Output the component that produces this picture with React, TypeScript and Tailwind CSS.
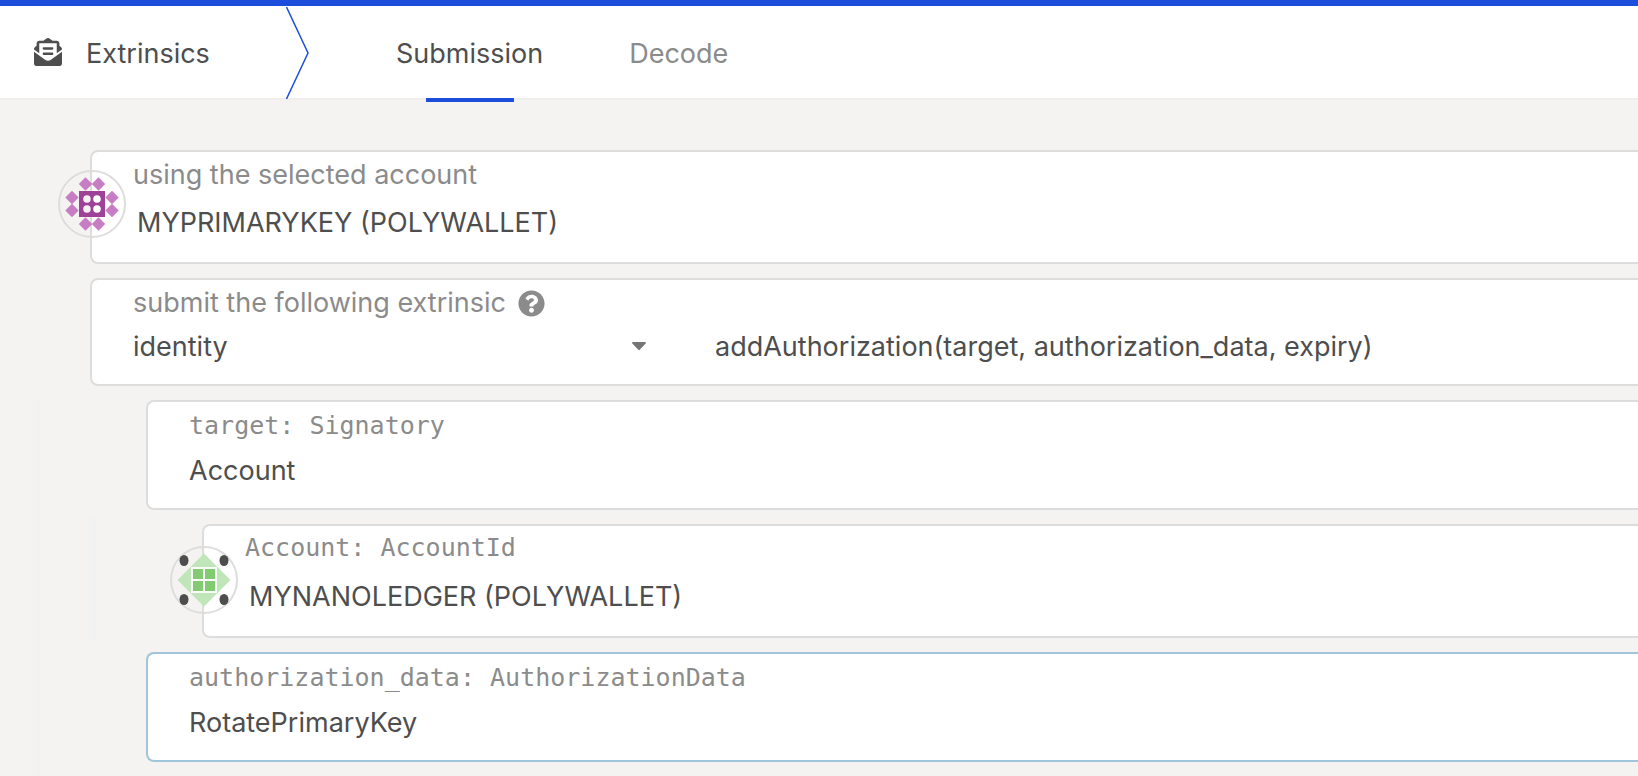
import React, { useState } from 'react';
import { FaCaretDown, FaEnvelopeOpenText, FaQuestionCircle } from 'react-icons/fa';

const ACCOUNTS = {
  primary: 'MYPRIMARYKEY (POLYWALLET)',
  ledger: 'MYNANOLEDGER (POLYWALLET)',
};

const valueClass = 'block h-9 w-full appearance-none bg-transparent text-[27px] leading-9 text-[#4e4e4e] outline-none';
const labelClass = 'h-9 text-[27px] leading-9 text-[#8b8b8b]';
const monoClass = "block h-9 font-['DejaVu_Sans_Mono',monospace] text-[25px] leading-[38px] text-[#8b8b8b]";
const cardClass = 'relative rounded-l-lg border-2 border-r-0 bg-white pl-[41px]';

const PrimaryIdenticon = () => (
  <svg viewBox="0 0 68 68" className="absolute -left-[34px] top-[18px] size-[68px]" aria-hidden="true">
    <circle cx="34" cy="34" r="33" fill="none" stroke="#dddddd" strokeWidth="2" />
    <g fill="#c77dc3">
      {[[27.5, 14], [40.5, 14], [27.5, 54], [40.5, 54], [14, 27.5], [14, 40.5], [54, 27.5], [54, 40.5]].map(([x, y]) => (
        <path key={`${x}-${y}`} d={`M${x} ${y - 6.7}l6.7 6.7l-6.7 6.7l-6.7 -6.7z`} />
      ))}
    </g>
    {/* the dots are holes, the card edge shows through */}
    <path
      fill="#9d4296"
      fillRule="evenodd"
      d="M21 21h26v26H21zM25.200 29a3.800 3.800 0 1 0 7.600 0a3.800 3.800 0 1 0 -7.600 0zM35.200 29a3.800 3.800 0 1 0 7.600 0a3.800 3.800 0 1 0 -7.600 0zM25.200 39a3.800 3.800 0 1 0 7.600 0a3.800 3.800 0 1 0 -7.600 0zM35.200 39a3.800 3.800 0 1 0 7.600 0a3.800 3.800 0 1 0 -7.600 0z"
    />
  </svg>
);

const LedgerIdenticon = () => (
  <svg viewBox="0 0 68 68" className="absolute -left-[34px] top-5 size-[68px]" aria-hidden="true">
    <circle cx="34" cy="34" r="33" fill="none" stroke="#dddddd" strokeWidth="2" />
    <path d="M34 7.500L60.500 34L34 60.500L7.500 34z" fill="#bfe5b8" />
    <rect x="21" y="21" width="26" height="26" fill="#fafaf9" />
    <g fill="#82cb73">
      <rect x="23" y="23" width="10" height="10" />
      <rect x="35" y="23" width="10" height="10" />
      <rect x="23" y="35" width="10" height="10" />
      <rect x="35" y="35" width="10" height="10" />
    </g>
    <g fill="#4d4d4d">
      <ellipse cx="14" cy="14.500" rx="4.500" ry="5.500" />
      <ellipse cx="54" cy="14.500" rx="4.500" ry="5.500" />
      <ellipse cx="14" cy="53.500" rx="4.500" ry="5.500" />
      <ellipse cx="54" cy="53.500" rx="4.500" ry="5.500" />
    </g>
  </svg>
);

const Header = () => (
  <header className="flex h-[100px] border-b-2 border-t-6 border-b-[#efeeed] border-t-[#1c4edb] bg-white text-[27px] leading-9 text-[#4e4e4e]">
    <div className="flex w-[286px] items-center gap-6 pl-[34px]">
      <FaEnvelopeOpenText size={28} />
      <h1 className="pt-1">Extrinsics</h1>
    </div>
    <svg viewBox="0 0 24 94" className="h-[94px] w-6" fill="none" stroke="#1c4edb" strokeWidth="1.500" aria-hidden="true">
      <path d="M0.500 1L22 47L0.500 93" />
    </svg>
    <nav className="flex gap-[86px] pl-[86px]">
      <a href="#submission" className="relative flex items-center pt-1">
        Submission
        <span className="absolute -bottom-1 left-1/2 h-1 w-[88px] -translate-x-1/2 bg-[#1c4edb]" />
      </a>
      <a href="#decode" className="flex items-center pt-1 text-[#8b8b8b]">Decode</a>
    </nav>
  </header>
);

export default function App() {
  const [account, setAccount] = useState(ACCOUNTS.primary);
  const [target, setTarget] = useState(ACCOUNTS.ledger);

  return (
    <div className="min-h-screen bg-[#f4f3f1] font-['Inter',sans-serif]">
      <Header />

      <main className="flex flex-col gap-3.5 pt-[50px] pl-[90px]">
        <div className={`${cardClass} h-[114px] border-[#dddddd] pt-[5px]`}>
          <PrimaryIdenticon />
          <label htmlFor="account" className={`${labelClass} block`}>using the selected account</label>
          <input id="account" className={`${valueClass} mt-3 pl-1`} value={account} onChange={(e) => setAccount(e.target.value)} />
        </div>

        <div className={`${cardClass} h-[108px] border-[#dddddd] pt-[5px]`}>
          <label htmlFor="section" className={`${labelClass} flex items-center gap-3`}>
            submit the following extrinsic
            <FaQuestionCircle size={27} />
          </label>
          <div className="mt-2 flex">
            <div className="relative w-[582px] shrink-0">
              <select id="section" className={valueClass}>
                <option>identity</option>
              </select>
              <FaCaretDown size={24} className="pointer-events-none absolute right-16 top-1 text-[#767676]" />
            </div>
            <select aria-label="method" className={valueClass}>
              <option>addAuthorization(target, authorization_data, expiry)</option>
            </select>
          </div>
        </div>

        {/* Call params */}
        <section className="-mt-1.5 -ml-14 flex flex-col gap-3.5 border-l-6 border-[#f2f2f2] pt-1.5 pb-3.5 pl-[106px]">
          <div className={`${cardClass} h-[110px] border-[#dddddd] pt-[5px]`}>
            <label htmlFor="target" className={monoClass}>target: Signatory</label>
            <select id="target" className={`${valueClass} mt-2.5`}>
              <option>Account</option>
            </select>
          </div>

          <div className="-my-2 -ml-14 border-l-6 border-[#f2f2f2] py-2 pl-[106px]">
            <div className={`${cardClass} h-[114px] border-[#dddddd] pt-[3px]`}>
              <LedgerIdenticon />
              <label htmlFor="account-id" className={monoClass}>Account: AccountId</label>
              <input id="account-id" className={`${valueClass} mt-3.5 pl-1`} value={target} onChange={(e) => setTarget(e.target.value)} />
            </div>
          </div>

          <div className={`${cardClass} h-[110px] border-[#9fc6da] pt-[5px]`}>
            <label htmlFor="auth-data" className={monoClass}>authorization_data: AuthorizationData</label>
            <select id="auth-data" className={`${valueClass} mt-2.5`}>
              <option>RotatePrimaryKey</option>
            </select>
          </div>
        </section>
      </main>
    </div>
  );
}
